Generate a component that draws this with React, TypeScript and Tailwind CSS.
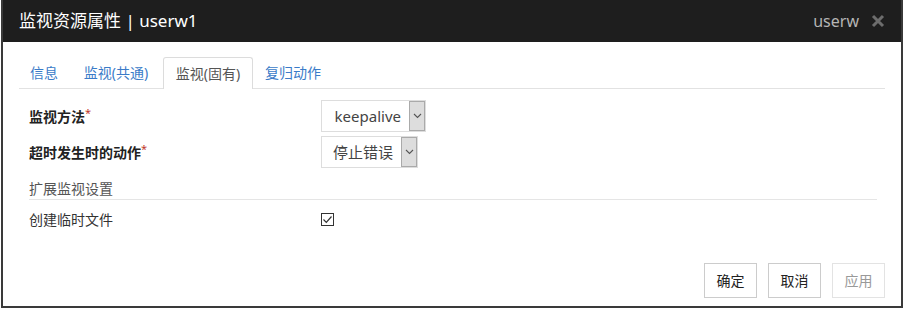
import React from 'react'

const font = { fontFamily: '"Noto Sans", "Noto Sans CJK SC", sans-serif' }

const tabs = [
  { label: '信息', w: 'w-[50px]' },
  { label: '监视(共通)', w: 'w-[94px]' },
  { label: '监视(固有)', w: 'w-[90px]', active: true },
  { label: '复归动作', w: 'w-[80px]' },
]

function Chevron() {
  return (
    <svg width="9" height="6" viewBox="0 0 9 6" fill="none">
      <path d="M1 1l3.5 3.5L8 1" stroke="#555" strokeWidth="1.1" />
    </svg>
  )
}

function Select({ value, width }: { value: string; width: string }) {
  return (
    <div className={`flex h-[32px] ${width} border border-[#ddd] bg-white`}>
      <div className="flex flex-1 items-center justify-end pr-[8px] text-[15px] text-[#444]">{value}</div>
      <div className="flex w-[16px] items-center justify-center border border-[#aaa] bg-[#ddd]">
        <Chevron />
      </div>
    </div>
  )
}

function Label({ text }: { text: string }) {
  return (
    <div className="w-[292px] text-[14px] font-bold text-[#222]">
      {text}
      <span className="relative -top-[5px] text-[11px] font-normal text-[#c0392b]">*</span>
    </div>
  )
}

export default function App() {
  return (
    <div className="h-[310px] w-[904px] bg-white" style={font}>
      <div className="ml-[1px] flex h-[308px] w-[902px] flex-col border-x-2 border-b-2 border-[#3a3a3a]">
        <div className="flex h-[42px] items-center justify-between bg-[#1e1e1e] pl-[16px] pr-[16px]">
          <span className="text-[17px] text-white">监视资源属性 | userw1</span>
          <div className="flex items-center gap-[12px]">
            <span className="text-[16px] text-[#b5b5b5]">userw</span>
            <svg width="14" height="14" viewBox="0 0 14 14">
              <path d="M2 2l10 10M12 2L2 12" stroke="#6d6d6d" strokeWidth="3" />
            </svg>
          </div>
        </div>

        <div className="flex flex-1 flex-col px-[16px]">
          <div className="mt-[15px] flex h-[32px] border-b border-[#e2e2e2]">
            {tabs.map((t) =>
              t.active ? (
                <div
                  key={t.label}
                  className={`${t.w} -mb-px flex items-center justify-center rounded-t-[3px] border border-b-0 border-[#dcdcdc] bg-white text-[14px] text-[#555]`}
                >
                  {t.label}
                </div>
              ) : (
                <div key={t.label} className={`${t.w} flex items-center justify-center text-[14px] text-[#3a7bc8]`}>
                  {t.label}
                </div>
              )
            )}
          </div>

          <div className="mt-[11px] flex items-center pl-[10px]">
            <Label text="监视方法" />
            <Select value="keepalive" width="w-[105px]" />
          </div>
          <div className="mt-[4px] flex items-center pl-[10px]">
            <Label text="超时发生时的动作" />
            <Select value="停止错误" width="w-[97px]" />
          </div>

          <div className="ml-[10px] mr-[8px] mt-[10px] border-b border-[#e5e5e5] text-[14px] text-[#555]">
            扩展监视设置
          </div>

          <div className="mt-[9px] flex items-center pl-[10px]">
            <div className="w-[292px] text-[14px] text-[#333]">创建临时文件</div>
            <div className="flex h-[13px] w-[13px] items-center justify-center border border-[#333] bg-white">
              <svg width="11" height="9" viewBox="0 0 11 9" fill="none">
                <path d="M1.5 4.5l2.8 2.8L9.5 1.5" stroke="#333" strokeWidth="1.2" />
              </svg>
            </div>
          </div>

          <div className="mt-auto mb-[8px] flex justify-end gap-[11px]">
            <button className="h-[35px] w-[53px] border border-[#ccc] bg-white text-[14px] text-[#222]">确定</button>
            <button className="h-[35px] w-[53px] border border-[#ccc] bg-white text-[14px] text-[#222]">取消</button>
            <button className="h-[35px] w-[53px] border border-[#e3e3e3] bg-white text-[14px] text-[#999]">应用</button>
          </div>
        </div>
      </div>
    </div>
  )
}
